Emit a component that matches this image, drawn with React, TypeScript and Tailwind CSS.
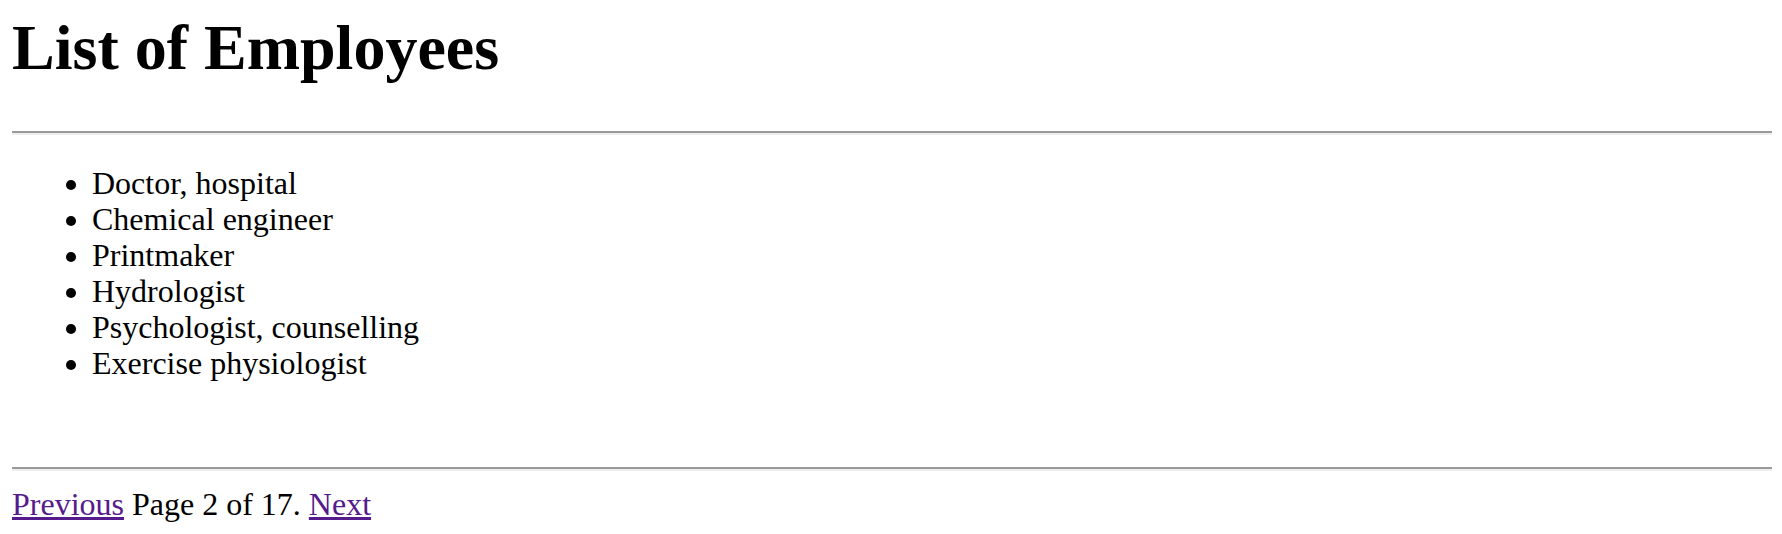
const jobs = [
  'Doctor, hospital',
  'Chemical engineer',
  'Printmaker',
  'Hydrologist',
  'Psychologist, counselling',
  'Exercise physiologist',
]

function Rule({ className = '' }: { className?: string }) {
  return <div className={`h-0 border-t-2 border-b-2 border-t-[#9a9a9a] border-b-[#eeeeee] ${className}`} />
}

export default function App() {
  return (
    <div className="min-h-[534px] bg-white pl-[12px] pr-[10px] pt-[11px] text-black font-['Liberation_Serif','Times_New_Roman',serif]">
      <h1 className="text-[64px] font-bold leading-[73.6px]">List of Employees</h1>
      <Rule className="mt-[46px]" />
      <ul className="mt-[30px] list-disc pl-[80px] text-[32px] leading-[36px]">
        {jobs.map((j) => (
          <li key={j}>{j}</li>
        ))}
      </ul>
      <Rule className="mt-[86px]" />
      <p className="mt-[15px] text-[32px] leading-[36px]">
        <a href="#" className="text-[#551a8b] underline">Previous</a> Page 2 of 17.{' '}
        <a href="#" className="text-[#551a8b] underline">Next</a>
      </p>
    </div>
  )
}
